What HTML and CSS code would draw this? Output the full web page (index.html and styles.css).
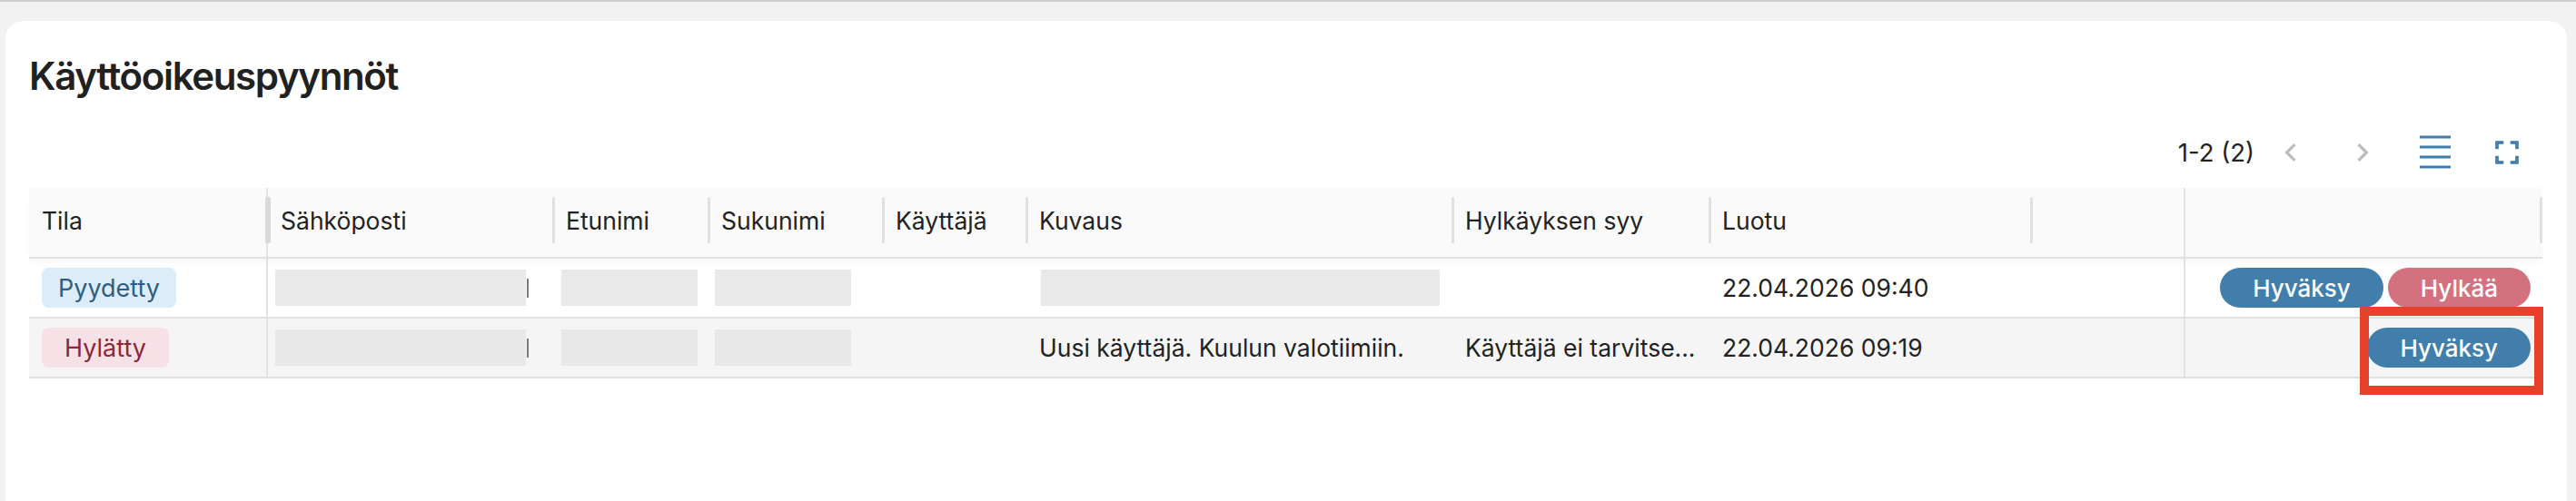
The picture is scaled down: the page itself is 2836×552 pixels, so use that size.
FILE: index.html
```html
<!DOCTYPE html>
<html lang="fi">
<head>
<meta charset="utf-8">
<title>Käyttöoikeuspyynnöt</title>
<link rel="stylesheet" href="styles.css">
</head>
<body>
<main class="card">
  <h1 class="title">Käyttöoikeuspyynnöt</h1>
  <div class="toolbar">
    <span class="count">1-2 (2)</span>
    <svg class="chev chev-left" viewBox="0 0 24 24" width="40" height="40"><path d="M15.41 7.41 14 6l-6 6 6 6 1.41-1.41L10.83 12z"/></svg>
    <svg class="chev chev-right" viewBox="0 0 24 24" width="40" height="40"><path d="M10 6 8.59 7.41 13.17 12l-4.58 4.59L10 18l6-6z"/></svg>
    <svg class="tool tool-density" viewBox="0 0 48 48" width="48" height="48"><rect x="7" y="5.5" width="34" height="3"/><rect x="7" y="16.5" width="34" height="3"/><rect x="7" y="27.5" width="34" height="3"/><rect x="7" y="38.5" width="34" height="3"/></svg>
    <svg class="tool tool-full" viewBox="0 0 24 24" width="44" height="44"><path d="M7 14H5v5h5v-2H7v-3zm-2-4h2V7h3V5H5v5zm12 7h-3v2h5v-5h-2v3zM14 5v2h3v3h2V5h-5z"/></svg>
  </div>

  <div class="table">
    <div class="row head">
      <div class="cell pin-left">Tila</div>
      <div class="cell">Sähköposti</div>
      <div class="cell">Etunimi</div>
      <div class="cell">Sukunimi</div>
      <div class="cell">Käyttäjä</div>
      <div class="cell">Kuvaus</div>
      <div class="cell">Hylkäyksen syy</div>
      <div class="cell">Luotu</div>
      <div class="cell filler"></div>
      <div class="cell pin-right"></div>
    </div>

    <div class="row">
      <div class="cell pin-left"><span class="chip chip-requested">Pyydetty</span></div>
      <div class="cell"><span class="redact redact-email"></span><span class="tail"></span></div>
      <div class="cell"><span class="redact redact-first"></span></div>
      <div class="cell"><span class="redact redact-last"></span></div>
      <div class="cell"></div>
      <div class="cell"><span class="redact redact-desc"></span></div>
      <div class="cell"></div>
      <div class="cell">22.04.2026 09:40</div>
      <div class="cell filler"></div>
      <div class="cell pin-right actions">
        <button class="btn btn-approve">Hyväksy</button>
        <button class="btn btn-reject">Hylkää</button>
      </div>
    </div>

    <div class="row alt">
      <div class="cell pin-left"><span class="chip chip-rejected">Hylätty</span></div>
      <div class="cell"><span class="redact redact-email"></span><span class="tail"></span></div>
      <div class="cell"><span class="redact redact-first"></span></div>
      <div class="cell"><span class="redact redact-last"></span></div>
      <div class="cell"></div>
      <div class="cell text">Uusi käyttäjä. Kuulun valotiimiin.</div>
      <div class="cell text">Käyttäjä ei tarvitse...</div>
      <div class="cell">22.04.2026 09:19</div>
      <div class="cell filler"></div>
      <div class="cell pin-right actions">
        <button class="btn btn-approve">Hyväksy</button>
      </div>
    </div>
  </div>
</main>
<div class="highlight"></div>
</body>
</html>
```

FILE: styles.css
```css
html, body {
  margin: 0;
  padding: 0;
  overflow: hidden;
}

body {
  background: #f2f2f2;
  border-top: 2px solid #cdcdcd;
  font-family: "Inter", "Noto Sans", "Liberation Sans", sans-serif;
  color: #212121;
  position: relative;
}

.card {
  background: #ffffff;
  margin: 21px 10px 0 6px;
  border-radius: 20px 20px 0 0;
  padding: 35px 27px 0 26px;
  min-height: 600px;
  box-sizing: border-box;
}

.title {
  margin: 0;
  font-size: 42px;
  line-height: 52px;
  font-weight: 600;
  letter-spacing: -1.35px;
  color: #212121;
}

.toolbar {
  margin-top: 36px;
  height: 44px;
  display: flex;
  justify-content: flex-end;
  align-items: center;
  padding-right: 17px;
}

.count {
  font-size: 27.5px;
  color: #222222;
}

.chev {
  fill: #bdbdbd;
}

.chev-left {
  margin-left: 20px;
}

.chev-right {
  margin-left: 39px;
}

.tool {
  fill: #3f7eac;
}

.tool-density {
  margin-left: 36px;
}

.tool-full {
  margin-left: 33px;
}

.table {
  margin-top: 17px;
}

.row {
  display: grid;
  grid-template-columns: 263px 314px 171px 192px 158px 469px 283px 354px 168px 395px;
  height: 66px;
  border-bottom: 2px solid #e0e0e0;
  background: #ffffff;
  box-sizing: border-box;
  font-size: 26.5px;
  color: #222222;
}

.row.alt {
  background: #f5f5f5;
}

.row.head {
  height: 78px;
  background: #fafafa;
  box-shadow: 0 5px 8px -3px rgba(0, 0, 0, 0.05);
  position: relative;
  z-index: 1;
}

.cell {
  display: flex;
  align-items: center;
  padding: 0 14px;
  box-sizing: border-box;
  white-space: nowrap;
  overflow: hidden;
  min-width: 0;
  position: relative;
}

.cell.text {
  display: block;
  line-height: 64px;
  text-overflow: ellipsis;
}

.head .cell {
  padding-bottom: 5px;
  overflow: visible;
}

.head .cell::after {
  content: "";
  position: absolute;
  right: -2px;
  top: 10px;
  width: 3px;
  height: 51px;
  border-radius: 2px;
  background: #e0e0e0;
  z-index: 2;
}

.head .cell.filler::after {
  display: none;
}

.head .cell.pin-right::after {
  right: 0;
}

.pin-left {
  border-right: 2px solid #e3e3e3;
}

.head .cell.pin-left::after {
  right: -5px;
  width: 6px;
  background: #d9d9d9;
}

.pin-right {
  border-left: 2px solid #e3e3e3;
}

.chip {
  display: inline-flex;
  align-items: center;
  justify-content: center;
  height: 44px;
  border-radius: 8px;
  font-size: 27px;
  box-sizing: border-box;
}

.chip-requested {
  width: 148px;
  background: #dcecf8;
  color: #2c5e85;
}

.chip-rejected {
  width: 140px;
  background: #f5e1e6;
  color: #8a2839;
}

.redact {
  display: block;
  height: 40px;
  background: #e9e9e9;
  flex: none;
}

.alt .redact {
  background: #e8e8e8;
}

.redact-email {
  width: 276px;
  margin-left: -6px;
}

.tail {
  display: block;
  width: 2px;
  height: 21px;
  margin-left: 1px;
  background: #7a7a7a;
  flex: none;
}

.redact-first {
  width: 150px;
  margin-left: -5px;
}

.redact-last {
  width: 150px;
  margin-left: -7px;
}

.redact-desc {
  width: 439px;
  margin-left: 2px;
}

.actions {
  justify-content: flex-end;
  gap: 5px;
  padding-right: 13px;
}

.btn {
  height: 44px;
  padding: 0 36px;
  border: none;
  border-radius: 22px;
  font-family: inherit;
  font-size: 26px;
  font-weight: 500;
  color: #ffffff;
}

.btn-approve {
  background: #417eab;
}

.btn-reject {
  background: #d4717e;
}

.highlight {
  position: absolute;
  left: 2598px;
  top: 336px;
  width: 202px;
  height: 97px;
  border: 10px solid #e8412b;
  box-sizing: border-box;
  z-index: 5;
}
```
